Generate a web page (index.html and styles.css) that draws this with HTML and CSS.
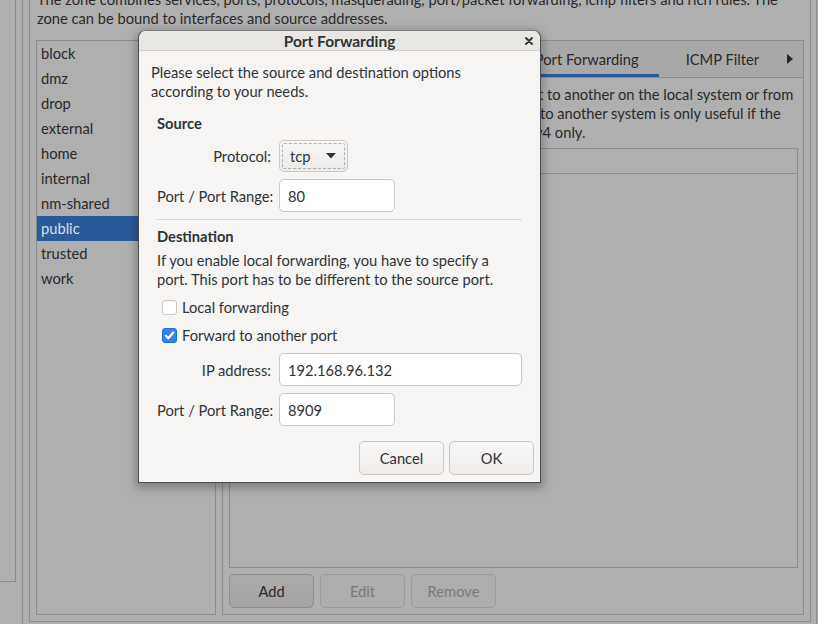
FILE: index.html
```html
<!DOCTYPE html>
<html>
<head>
<meta charset="utf-8">
<title>Port Forwarding</title>
<link rel="stylesheet" href="styles.css">
</head>
<body>
<div class="screen">
  <div class="strip"></div>
  <div class="frame-a">
    <div class="frame-b">
      <p class="zone-desc">The zone combines services, ports, protocols, masquerading, port/packet forwarding, icmp filters and rich rules. The<br>zone can be bound to interfaces and source addresses.</p>
      <div class="zone-body">
        <ul class="zone-list">
          <li>block</li>
          <li>dmz</li>
          <li>drop</li>
          <li>external</li>
          <li>home</li>
          <li>internal</li>
          <li>nm-shared</li>
          <li class="selected">public</li>
          <li>trusted</li>
          <li>work</li>
        </ul>
        <div class="notebook">
          <div class="tabs">
            <div class="tab-strip">
              <div class="tab">Masquerading</div>
              <div class="tab active">Port Forwarding</div>
              <div class="tab tab-icmp">ICMP Filter</div>
            </div>
            <div class="tab-arrow"><svg width="8" height="10" viewBox="0 0 8 10"><path d="M1 0 L7 5 L1 10 Z" fill="#262626"/></svg></div>
          </div>
          <div class="tab-page">
            <div class="pf-text">
              <div class="pf-line"><span class="pf-lead">Add entries to forward ports either from one por</span><span>t to another on the local system or from</span></div>
              <div class="pf-line"><span class="pf-lead pf-lead-wide">the local system to another system. Forwarding</span><span>to another system is only useful if the</span></div>
              <div class="pf-line"><span class="pf-lead pf-lead-narrow">interface is masqueraded. Port forwarding is IP</span><span>v4 only.</span></div>
            </div>
            <div class="pf-table"><div class="pf-head"></div></div>
            <div class="pf-actions">
              <button class="bg-btn">Add</button>
              <button class="bg-btn disabled">Edit</button>
              <button class="bg-btn disabled">Remove</button>
            </div>
          </div>
        </div>
      </div>
    </div>
  </div>

  <div class="dialog">
    <div class="titlebar">
      <span class="title">Port Forwarding</span>
      <span class="close"><svg width="8" height="8" viewBox="0 0 8 8"><path d="M1 1 L7 7 M7 1 L1 7" stroke="#2e3436" stroke-width="1.8" stroke-linecap="round"/></svg></span>
    </div>
    <div class="dlg-body">
      <p class="intro">Please select the source and destination options<br>according to your needs.</p>
      <div class="section">
        <div class="heading heading-source">Source</div>
        <div class="form-grid">
          <label class="lbl">Protocol:</label>
          <div class="combo"><span>tcp</span><svg width="10" height="6" viewBox="0 0 10 6"><path d="M0 0 H10 L5 5.5 Z" fill="#2e3436"/></svg></div>
          <label class="lbl">Port / Port Range:</label>
          <div class="entry entry-short">80</div>
        </div>
        <div class="separator"></div>
        <div class="heading heading-dest">Destination</div>
        <p class="dest-text">If you enable local forwarding, you have to specify a<br>port. This port has to be different to the source port.</p>
        <div class="checks">
          <div class="check-row"><span class="check"></span><span>Local forwarding</span></div>
          <div class="check-row"><span class="check checked"><svg width="13" height="13" viewBox="0 0 13 13"><path d="M2.8 6.8 L5.3 9.3 L10.3 3.6" fill="none" stroke="#fff" stroke-width="2.2" stroke-linecap="round" stroke-linejoin="round"/></svg></span><span>Forward to another port</span></div>
        </div>
        <div class="form-grid form-dest">
          <label class="lbl">IP address:</label>
          <div class="entry">192.168.96.132</div>
          <label class="lbl">Port / Port Range:</label>
          <div class="entry entry-short">8909</div>
        </div>
      </div>
      <div class="dlg-actions">
        <button class="btn">Cancel</button>
        <button class="btn">OK</button>
      </div>
    </div>
  </div>
</div>
</body>
</html>
```

FILE: styles.css
```css
* { box-sizing: border-box; }
html, body { margin: 0; padding: 0; }
body {
  width: 818px;
  height: 624px;
  overflow: hidden;
  background: #afafaf;
  font-family: "Lato", "Noto Sans", sans-serif;
  font-size: 14.7px;
  color: #2a2a2a;
}
.screen {
  position: relative;
  width: 818px;
  height: 624px;
  display: flex;
  overflow: hidden;
}
.strip {
  flex: 0 0 16px;
  height: 582px;
  border-right: 1px solid #8c8c8c;
  border-bottom: 1px solid #8c8c8c;
}
.frame-a {
  flex: 1;
  margin: -30px 1px 0 6px;
  height: 654px;
  border-left: 1px solid #8c8c8c;
  border-right: 1px solid #8c8c8c;
  padding: 6px 5px 2px 6px;
  display: flex;
  flex-direction: column;
  min-width: 0;
}
.frame-b {
  flex: 1;
  border: 1px solid #8c8c8c;
  padding: 13px 6px 6px 6px;
  display: flex;
  flex-direction: column;
  min-height: 0;
  overflow: hidden;
}
.zone-desc {
  margin: 0 0 12px 1px;
  line-height: 19px;
  white-space: nowrap;
}
.zone-body {
  flex: 1;
  display: flex;
  gap: 6px;
  min-height: 0;
}
.zone-list {
  flex: 0 0 180px;
  margin: 0;
  padding: 0;
  list-style: none;
  border: 1px solid #8c8c8c;
}
.zone-list li {
  height: 25px;
  line-height: 25px;
  padding-left: 4px;
}
.zone-list li.selected {
  background: #2a5a9b;
  color: #d9dfe9;
}
.notebook {
  flex: 1;
  border: 1px solid #8c8c8c;
  display: flex;
  flex-direction: column;
  min-width: 0;
}
.tabs {
  height: 37px;
  flex: none;
  background: #a8a8a8;
  border-bottom: 1px solid #8c8c8c;
  display: flex;
}
.tab-strip {
  flex: 1;
  display: flex;
  justify-content: flex-end;
  overflow: hidden;
}
.tab {
  padding: 0 20px;
  line-height: 36px;
  white-space: nowrap;
}
.tab.active { box-shadow: inset 0 -3px #2a5a9b; }
.tab-icmp { padding: 0 18px 0 27px; }
.tab-arrow {
  flex: 0 0 26px;
  display: flex;
  align-items: center;
  justify-content: center;
}
.tab-page {
  flex: 1;
  display: flex;
  flex-direction: column;
  padding: 7px 5px 6px 6px;
  min-height: 0;
}
.pf-text { line-height: 19px; margin-bottom: 6px; }
.pf-line { display: flex; white-space: nowrap; }
.pf-lead {
  flex: 0 0 309px;
  display: flex;
  justify-content: flex-end;
  overflow: hidden;
}
.pf-lead-wide { flex-basis: 311px; }
.pf-lead-narrow { flex-basis: 306px; }
.pf-table {
  flex: 1;
  border: 1px solid #8c8c8c;
}
.pf-head {
  height: 25px;
  border-bottom: 1px solid #8c8c8c;
}
.pf-actions {
  margin-top: 6px;
  display: flex;
  gap: 6px;
}
.bg-btn {
  width: 85px;
  height: 34px;
  border: 1px solid #8e8e8e;
  border-radius: 5px;
  background: linear-gradient(#aaaaaa, #a4a4a4);
  font: inherit;
  color: #2a2a2a;
  padding: 0;
}
.bg-btn.disabled {
  background: #adadad;
  border-color: #9a9a9a;
  color: #7a7a7a;
}

/* dialog */
.dialog {
  position: absolute;
  left: 138px;
  top: 30px;
  width: 403px;
  height: 453px;
  background: #f6f5f4;
  border: 1px solid #4c4c4c;
  border-top-color: #7a7a7a;
  border-radius: 8px 8px 0 0;
  box-shadow: 0 3px 10px 2px rgba(0, 0, 0, 0.28);
  color: #2e3436;
  display: flex;
  flex-direction: column;
}
.titlebar {
  position: relative;
  height: 20px;
  flex: none;
  background: #e9e7e4;
  border-bottom: 1px solid #d3cfca;
  border-radius: 7px 7px 0 0;
  display: flex;
  align-items: center;
  justify-content: center;
}
.title { font-weight: bold; font-size: 15.5px; }
.close {
  position: absolute;
  right: 7px;
  top: 6px;
  width: 8px;
  height: 8px;
  display: flex;
}
.dlg-body {
  flex: 1;
  display: flex;
  flex-direction: column;
  padding: 12px 12px 7px 12px;
}
.intro { margin: 0; line-height: 19px; }
.section { padding-left: 6px; margin-right: 6px; }
.heading { font-weight: bold; line-height: 19px; }
.heading-source { margin: 13px 0 7px; }
.heading-dest { margin: 7px 0 5px; }
.form-grid {
  display: grid;
  grid-template-columns: 114px 1fr;
  column-gap: 8px;
  row-gap: 7px;
  align-items: center;
}
.lbl { text-align: right; white-space: nowrap; }
.combo {
  width: 69px;
  height: 32px;
  border: 1px solid #cdc7c2;
  border-radius: 5px;
  background: linear-gradient(#f8f7f6, #edebe9);
  outline: 1px dashed rgba(46, 52, 54, 0.35);
  outline-offset: -4px;
  display: flex;
  align-items: center;
  justify-content: space-between;
  padding: 0 11px 0 10px;
}
.entry {
  height: 33px;
  border: 1px solid #cdc7c2;
  border-radius: 5px;
  background: #fff;
  padding: 0 8px;
  display: flex;
  align-items: center;
}
.entry-short { width: 116px; }
.separator {
  height: 1px;
  background: #dcd8d3;
  margin-top: 7px;
}
.dest-text { margin: 0; line-height: 19px; white-space: nowrap; }
.checks {
  margin-top: 7px;
  display: flex;
  flex-direction: column;
  gap: 6px;
}
.check-row {
  height: 22px;
  display: flex;
  align-items: center;
  gap: 5px;
  padding-left: 5px;
}
.check {
  width: 15px;
  height: 15px;
  border: 1px solid #cdc7c2;
  border-radius: 3px;
  background: #fff;
  display: flex;
  align-items: center;
  justify-content: center;
}
.check.checked {
  background: #3584e4;
  border-color: #1c6fd6;
}
.form-dest { margin-top: 7px; }
.dlg-actions {
  margin: auto -6px 0 0;
  display: flex;
  justify-content: flex-end;
  gap: 5px;
}
.btn {
  width: 85px;
  height: 34px;
  border: 1px solid #cdc7c2;
  border-radius: 5px;
  background: linear-gradient(#f8f7f6, #efedeb);
  font: inherit;
  color: #2e3436;
  padding: 0;
}
```
